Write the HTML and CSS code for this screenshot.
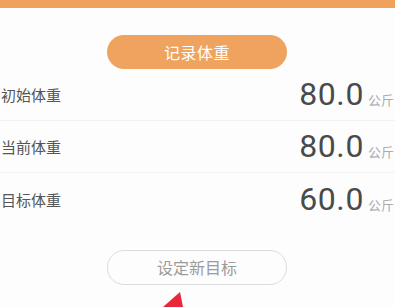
FILE: index.html
```html
<!DOCTYPE html>
<html lang="zh">
<head>
<meta charset="utf-8">
<link rel="stylesheet" href="styles.css">
</head>
<body>
<div class="page">
  <div class="topbar"></div>
  <div class="btn-wrap">
    <div class="btn btn-primary">记录体重</div>
  </div>
  <div class="list">
    <div class="row">
      <span class="label">初始体重</span>
      <span class="value"><span class="num">80.0</span><span class="unit">公斤</span></span>
    </div>
    <div class="row">
      <span class="label">当前体重</span>
      <span class="value"><span class="num">80.0</span><span class="unit">公斤</span></span>
    </div>
    <div class="row last">
      <span class="label">目标体重</span>
      <span class="value"><span class="num">60.0</span><span class="unit">公斤</span></span>
    </div>
  </div>
  <div class="btn-wrap second">
    <div class="btn btn-outline">设定新目标</div>
  </div>
  <svg class="arrow" width="30" height="20" viewBox="0 0 30 20">
    <polygon points="17,0 0,15 20,15" fill="#e8283a"/>
  </svg>
</div>
</body>
</html>
```

FILE: styles.css
```css
html, body {
  margin: 0;
  padding: 0;
  background: #fdfdfd;
  overflow: hidden;
}
.page {
  position: relative;
  width: 395px;
  height: 307px;
  font-family: "Noto Sans CJK SC", "Noto Sans", sans-serif;
}
.topbar {
  height: 8px;
  background: #f0a25c;
}
.btn-wrap {
  display: flex;
  justify-content: center;
  padding-top: 27px;
}
.btn-wrap.second {
  padding-top: 24px;
}
.btn {
  width: 180px;
  height: 34px;
  border-radius: 17px;
  display: flex;
  align-items: center;
  justify-content: center;
  font-size: 16px;
  box-sizing: border-box;
  margin-left: -1px;
}
.btn-primary {
  background: #f0a35e;
  color: #fff;
  letter-spacing: 0.5px;
}
.btn-outline {
  height: 35px;
  border: 1px solid #dcdcdc;
  color: #9a9a9a;
  background: #fdfdfd;
  font-size: 16px;
}
.list {
  margin-top: -1px;
}
.row {
  height: 52.5px;
  box-sizing: border-box;
  display: flex;
  align-items: center;
  justify-content: space-between;
  border-bottom: 1px solid #f2f2f2;
  padding-left: 1px;
  padding-right: 1px;
}
.row.last {
  border-bottom: none;
}
.label {
  font-size: 15px;
  color: #555;
  margin-top: 1px;
}
.value {
  display: flex;
  align-items: baseline;
}
.num {
  font-family: Roboto, "Noto Sans", sans-serif;
  font-size: 32px;
  color: #4a4a4a;
  letter-spacing: 0.6px;
}
.unit {
  font-size: 13px;
  color: #ababab;
  margin-left: 4px;
}
.arrow {
  position: absolute;
  left: 163px;
  top: 292px;
}
```
